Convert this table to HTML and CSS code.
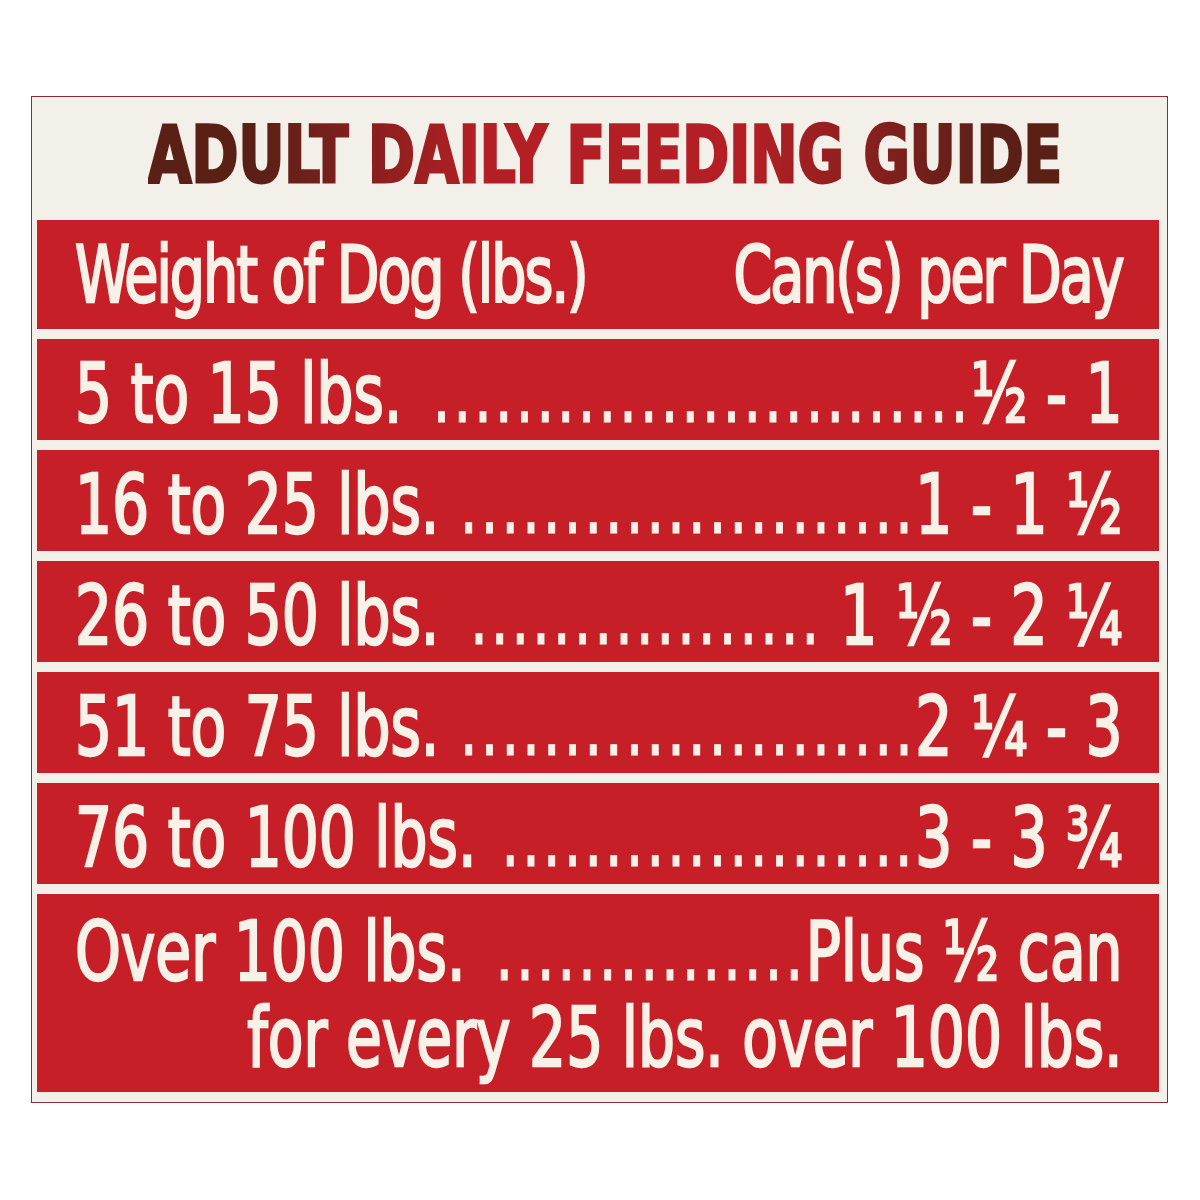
FILE: index.html
```html
<!DOCTYPE html>
<html lang="en">
<head>
<meta charset="utf-8">
<title>Adult Daily Feeding Guide</title>
<link rel="stylesheet" href="styles.css">
</head>
<body>
<div class="panel">
  <h1 class="title"><span class="title-text">ADULT DAILY FEEDING GUIDE</span></h1>
  <div class="table">
    <div class="row head">
      <div class="cells">
        <span class="label">Weight of Dog (lbs.)</span>
        <span class="value">Can(s) per Day</span>
      </div>
    </div>
    <div class="row">
      <div class="cells">
        <span class="label">5 to 15 lbs.</span>
        <span class="value"><span class="dots">..........................</span>½ - 1</span>
      </div>
    </div>
    <div class="row">
      <div class="cells">
        <span class="label">16 to 25 lbs.</span>
        <span class="value"><span class="dots">......................</span>1 - 1 ½</span>
      </div>
    </div>
    <div class="row">
      <div class="cells">
        <span class="label">26 to 50 lbs.</span>
        <span class="value"><span class="dots">.................</span> 1 ½ - 2 ¼</span>
      </div>
    </div>
    <div class="row">
      <div class="cells">
        <span class="label">51 to 75 lbs.</span>
        <span class="value"><span class="dots">......................</span>2 ¼ - 3</span>
      </div>
    </div>
    <div class="row">
      <div class="cells">
        <span class="label">76 to 100 lbs.</span>
        <span class="value"><span class="dots">....................</span>3 - 3 ¾</span>
      </div>
    </div>
    <div class="row tall">
      <div class="cells stack">
        <div class="line">
          <span class="label">Over 100 lbs.</span>
          <span class="value"><span class="dots">...............</span>Plus ½ can</span>
        </div>
        <div class="line end">
          <span class="value">for every 25 lbs. over 100 lbs.</span>
        </div>
      </div>
    </div>
  </div>
</div>
</body>
</html>
```
FILE: styles.css
```css
html, body {
  margin: 0;
  padding: 0;
  background: #ffffff;
}

body {
  padding: 96px 0 0 31px;
}

.panel {
  width: 1137px;
  box-sizing: border-box;
  background: #f3efe9;
  border: 1px solid #8c2a3a;
  padding: 0 8px 10px 5px;
  font-family: "DejaVu Sans Condensed", "Liberation Sans", sans-serif;
}

.title {
  margin: 0;
  height: 123px;
  box-sizing: border-box;
  padding-top: 18px;
  font-size: 78px;
  line-height: 80px;
  font-weight: bold;
  text-align: center;
  white-space: nowrap;
}

.title-text {
  display: inline-block;
  transform: scaleX(0.805);
  transform-origin: 50% 50%;
  background: linear-gradient(90deg, #5a2016 0%, #5a2016 12%, #b41f25 36%, #b41f25 66%, #5a2016 92%, #5a2016 100%);
  -webkit-background-clip: text;
  background-clip: text;
  color: transparent;
  -webkit-text-stroke: 3px transparent;
}

.table {
  display: flex;
  flex-direction: column;
  gap: 10px;
}

.row {
  background: #c61f27;
  color: #f8f1e8;
  height: 101px;
  box-sizing: border-box;
  padding: 8px 36px 0 38px;
  display: flex;
  align-items: center;
  overflow: hidden;
  font-size: 82px;
  line-height: 86px;
  white-space: nowrap;
  -webkit-text-stroke: 2.4px #f8f1e8;
}

.cells {
  flex: none;
  width: 1326px;
  transform: scaleX(0.79);
  transform-origin: 0 50%;
  display: flex;
  justify-content: space-between;
}

.dots {
  letter-spacing: 2.8px;
  -webkit-text-stroke: 1px #f8f1e8;
}

.row.head {
  height: 109px;
  padding-top: 0;
  font-size: 78px;
  letter-spacing: -2.5px;
}

.row.tall {
  height: 198px;
  padding-top: 4px;
}

.cells.stack {
  flex-direction: column;
}

.line {
  display: flex;
  justify-content: space-between;
}

.line.end {
  justify-content: flex-end;
}
```
